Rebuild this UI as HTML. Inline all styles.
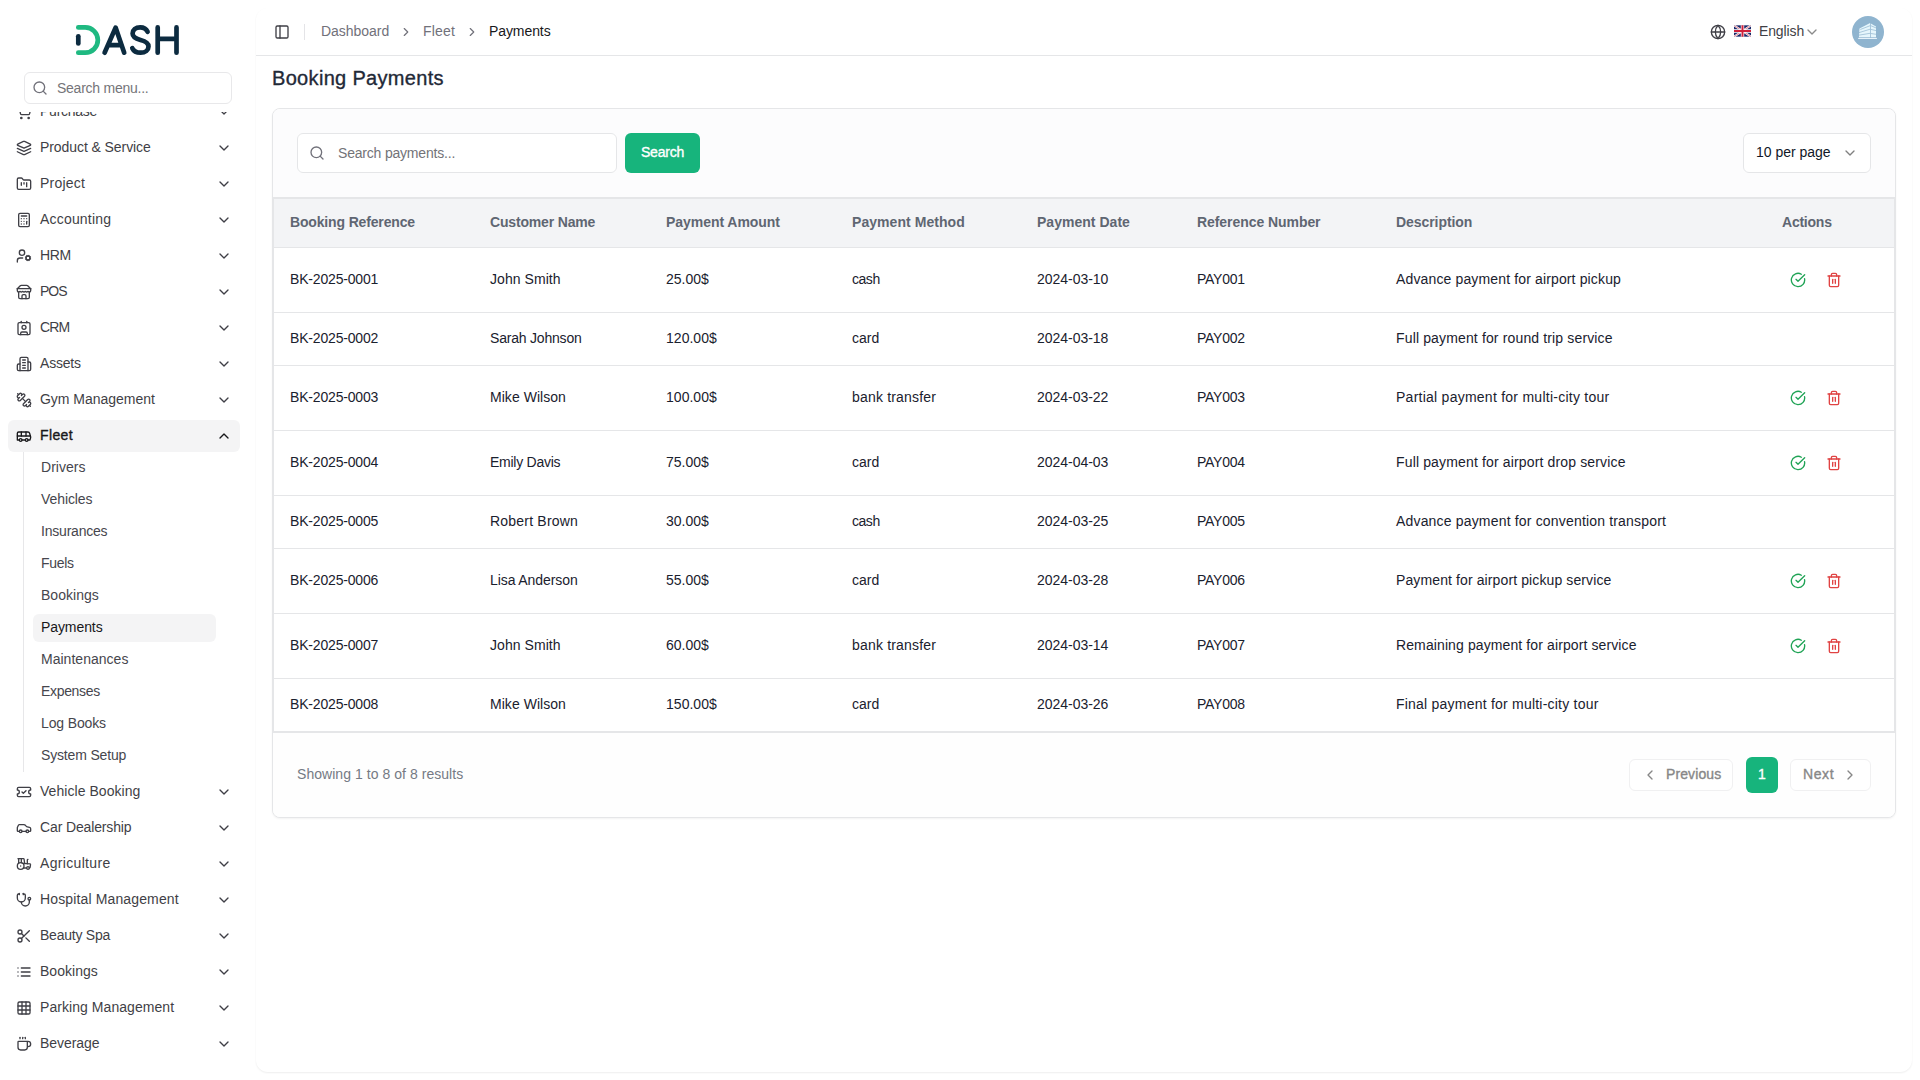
<!DOCTYPE html>
<html><head><meta charset="utf-8"><title>Booking Payments</title>
<style>
*{box-sizing:border-box;margin:0;padding:0}
html,body{width:1920px;height:1080px;overflow:hidden}
body{font-family:"Liberation Sans", sans-serif;font-size:14px;line-height:20px;color:#0f172a;background:#fff;position:relative;-webkit-font-smoothing:antialiased}
.abs{position:absolute}
#sb{position:absolute;left:0;top:0;width:256px;height:1080px;background:#fff;color:#3f3f46}
#sbsearch{position:absolute;left:24px;top:72px;width:208px;height:32px;border:1px solid #e8e8ea;border-radius:6px;background:#fff}
#sbsearch svg{position:absolute;left:7px;top:7px;color:#71717a}
#sbsearch span.ph{position:absolute;left:32px;top:5px;color:#757579;white-space:nowrap}
#scroll{position:absolute;left:0;top:112px;width:256px;height:968px;overflow:hidden}
#scroll>div.in{position:absolute;left:0;top:-112px;width:256px;height:1080px}
.mi{position:absolute;left:8px;width:232px;height:32px;border-radius:6px;display:flex;align-items:center;padding:0 8px;gap:8px;white-space:nowrap}
.mi.act{background:#f4f4f5;color:#18181b;font-weight:500}
.mi .ml{display:block;position:relative;top:-1px}
.si{position:absolute;left:33px;width:183px;height:28px;border-radius:6px;padding:3px 8px 0 8px;white-space:nowrap;color:#46464d}
.si.act{background:#f4f4f5;color:#18181b}
#subline{position:absolute;left:23px;top:452px;width:1px;height:320px;background:#e7e7e9}
#main{position:absolute;left:256px;top:8px;width:1656px;height:1064px;background:#fff;border-radius:12px;box-shadow:0 1px 2px rgba(0,0,0,.07)}
#hdr{position:absolute;left:0;top:0;width:1656px;height:48px;border-bottom:1px solid #e5e6e8}
.bc{position:absolute;top:13px;white-space:nowrap;color:#71717a}
#title{position:absolute;left:16px;top:56px;font-size:20px;line-height:28px;font-weight:500;color:#1f2937;white-space:nowrap}
#card{position:absolute;left:16px;top:100px;width:1624px;height:710px;border:1px solid #e5e6e8;border-radius:8px;background:#fff;box-shadow:0 1px 2px rgba(0,0,0,.05);overflow:hidden}
#ctop{position:absolute;left:0;top:0;width:1622px;height:89px;background:#fcfcfd;border-bottom:1px solid #e5e6e8}
#sinput{position:absolute;left:24px;top:24px;width:320px;height:40px;border:1px solid #e5e6e8;border-radius:6px;background:#fff}
#sinput svg{position:absolute;left:11px;top:11px;color:#71717a}
#sinput span.ph{position:absolute;left:40px;top:9px;color:#737378;white-space:nowrap}
#sbtn{position:absolute;left:352px;top:24px;width:75px;height:40px;border-radius:6px;background:#17b47c;color:#fff;font-weight:500;text-align:center;padding-top:9px;white-space:nowrap}
#pp{position:absolute;left:1470px;top:24px;width:128px;height:40px;border:1px solid #e5e6e8;border-radius:6px;background:#fff;color:#111827}
#pp span.t{position:absolute;left:12px;top:8px;white-space:nowrap}
#pp svg{position:absolute;left:98px;top:11px;color:#808080}
#twrap{position:absolute;left:0;top:89px;width:1622px;height:534px;border:1px solid #e5e6e8;background:#fff}
table{border-collapse:separate;border-spacing:0;table-layout:fixed;width:1620px}
th{height:49px;background:#f3f4f6;border-bottom:1px solid #e5e6e8;text-align:left;padding:0 16px;font-weight:600;color:#5f6672;white-space:nowrap;vertical-align:middle;padding-bottom:2px}
th>span,th{}
td{padding:0 16px 2px 16px;border-bottom:1px solid #e5e6e8;vertical-align:middle;white-space:nowrap;color:#1a212e}
tr.tall td{height:65px}
tr.short td{height:53px}
tr:last-child td{border-bottom:0;height:52px}
td>span,td{}
td.ac{padding-bottom:0}
.acts{display:flex;gap:4px}
.ab{width:32px;height:32px;display:flex;align-items:center;justify-content:center}
.ab.g{color:#1fa355}
.ab.r{color:#e04343}
#foot{position:absolute;left:0;top:623px;width:1622px;height:85px;border-top:1px solid #e5e6e8;background:#fefefe}
#foot .info{position:absolute;left:24px;top:31px;color:#757a84;white-space:nowrap}
.pb{position:absolute;top:26px;height:32px;border:1px solid #f0f0f1;border-radius:6px;background:#fff;color:#878787;font-weight:500;white-space:nowrap;display:flex;align-items:center;padding-bottom:2px}
.pb svg{position:relative;top:1px}
#p1{position:absolute;left:1473px;top:24px;width:32px;height:36px;border-radius:6px;background:#17b47c;color:#fff;font-weight:500;text-align:center;padding-top:7px}
.mi.act .ml,#title,#sbtn,.pb,#p1{-webkit-text-stroke:0.35px currentColor}
</style></head><body>
<div id="sb">
<svg width="128" height="48" viewBox="64 16 128 48" style="position:absolute;left:64px;top:16px" fill="none" stroke-linecap="round" stroke-linejoin="round" stroke-width="4.7">
<path d="M78.3 27.4H85.2a12.65 12.65 0 0 1 0 25.3H78.3" stroke="#1fb981"/>
<path d="M78.3 36.3V43.4" stroke="#0c2b40"/>
<path d="M104.6 52.7 115.6 27.6 124.2 52.7M108.5 45.2H121.3" stroke="#0c2b40"/>
<path d="M147.6 31.8C146.3 29 143.6 27.4 140.2 27.4C135.6 27.4 132.6 30 132.6 33.6C132.6 37.6 136 38.9 140.5 40C145.2 41.2 148.5 42.6 148.5 46.4C148.5 50 145.3 52.7 140.6 52.7C136.6 52.7 133.6 51 132.3 48.2" stroke="#0c2b40"/>
<path d="M157.7 27.4V52.7M176.5 27.4V52.7M157.7 38.8H176.5" stroke="#0c2b40"/>
</svg>
<div id="sbsearch"><svg width="16" height="16" viewBox="0 0 24 24" fill="none" stroke="currentColor" stroke-width="2" stroke-linecap="round" stroke-linejoin="round" style="display:block;flex:none;"><circle cx="11" cy="11" r="8"/><path d="m21 21-4.3-4.3"/></svg><span class="ph"><span style="letter-spacing:-0.252px">Search menu...</span></span></div>
<div id="scroll"><div class="in">
<div id="subline"></div>
<div class="mi" style="top:96px"><svg width="16" height="16" viewBox="0 0 24 24" fill="none" stroke="currentColor" stroke-width="2" stroke-linecap="round" stroke-linejoin="round" style="display:block;flex:none;"><circle cx="8" cy="21" r="1"/><circle cx="19" cy="21" r="1"/><path d="M2.05 2.05h2l2.66 12.42a2 2 0 0 0 2 1.58h9.78a2 2 0 0 0 1.95-1.57l1.65-7.43H5.12"/></svg><span class="ml"><span style="letter-spacing:-0.248px">Purchase</span></span><svg width="16" height="16" viewBox="0 0 24 24" fill="none" stroke="currentColor" stroke-width="2" stroke-linecap="round" stroke-linejoin="round" style="display:block;flex:none;margin-left:auto"><path d="m6 9 6 6 6-6"/></svg></div>
<div class="mi" style="top:132px"><svg width="16" height="16" viewBox="0 0 24 24" fill="none" stroke="currentColor" stroke-width="2" stroke-linecap="round" stroke-linejoin="round" style="display:block;flex:none;"><path d="m12.83 2.18a2 2 0 0 0-1.66 0L2.6 6.08a1 1 0 0 0 0 1.83l8.58 3.91a2 2 0 0 0 1.66 0l8.58-3.9a1 1 0 0 0 0-1.83Z"/><path d="m22 17.65-9.17 4.16a2 2 0 0 1-1.66 0L2 17.65"/><path d="m22 12.65-9.17 4.16a2 2 0 0 1-1.66 0L2 12.65"/></svg><span class="ml"><span style="letter-spacing:-0.078px">Product &amp; Service</span></span><svg width="16" height="16" viewBox="0 0 24 24" fill="none" stroke="currentColor" stroke-width="2" stroke-linecap="round" stroke-linejoin="round" style="display:block;flex:none;margin-left:auto"><path d="m6 9 6 6 6-6"/></svg></div>
<div class="mi" style="top:168px"><svg width="16" height="16" viewBox="0 0 24 24" fill="none" stroke="currentColor" stroke-width="2" stroke-linecap="round" stroke-linejoin="round" style="display:block;flex:none;"><path d="M4 20h16a2 2 0 0 0 2-2V8a2 2 0 0 0-2-2h-7.93a2 2 0 0 1-1.66-.9l-.82-1.2A2 2 0 0 0 7.93 3H4a2 2 0 0 0-2 2v13c0 1.1.9 2 2 2Z"/><path d="M8 10v4"/><path d="M12 10v2"/><path d="M16 10v6"/></svg><span class="ml"><span style="letter-spacing:0.203px">Project</span></span><svg width="16" height="16" viewBox="0 0 24 24" fill="none" stroke="currentColor" stroke-width="2" stroke-linecap="round" stroke-linejoin="round" style="display:block;flex:none;margin-left:auto"><path d="m6 9 6 6 6-6"/></svg></div>
<div class="mi" style="top:204px"><svg width="16" height="16" viewBox="0 0 24 24" fill="none" stroke="currentColor" stroke-width="2" stroke-linecap="round" stroke-linejoin="round" style="display:block;flex:none;"><rect width="16" height="20" x="4" y="2" rx="2"/><line x1="8" x2="16" y1="6" y2="6"/><line x1="16" x2="16" y1="14" y2="18"/><path d="M16 10h.01"/><path d="M12 10h.01"/><path d="M8 10h.01"/><path d="M12 14h.01"/><path d="M8 14h.01"/><path d="M12 18h.01"/><path d="M8 18h.01"/></svg><span class="ml"><span style="letter-spacing:0.188px">Accounting</span></span><svg width="16" height="16" viewBox="0 0 24 24" fill="none" stroke="currentColor" stroke-width="2" stroke-linecap="round" stroke-linejoin="round" style="display:block;flex:none;margin-left:auto"><path d="m6 9 6 6 6-6"/></svg></div>
<div class="mi" style="top:240px"><svg width="16" height="16" viewBox="0 0 24 24" fill="none" stroke="currentColor" stroke-width="2" stroke-linecap="round" stroke-linejoin="round" style="display:block;flex:none;"><circle cx="18" cy="15" r="3"/><circle cx="9" cy="7" r="4"/><path d="M10 15H6a4 4 0 0 0-4 4v2"/><path d="m21.7 16.4-.9-.3"/><path d="m15.2 13.9-.9-.3"/><path d="m16.6 18.7.3-.9"/><path d="m19.1 12.2.3-.9"/><path d="m19.6 18.7-.4-1"/><path d="m16.8 12.3-.4-1"/><path d="m14.3 16.6 1-.4"/><path d="m20.7 13.8 1-.4"/></svg><span class="ml"><span style="letter-spacing:-0.406px">HRM</span></span><svg width="16" height="16" viewBox="0 0 24 24" fill="none" stroke="currentColor" stroke-width="2" stroke-linecap="round" stroke-linejoin="round" style="display:block;flex:none;margin-left:auto"><path d="m6 9 6 6 6-6"/></svg></div>
<div class="mi" style="top:276px"><svg width="16" height="16" viewBox="0 0 24 24" fill="none" stroke="currentColor" stroke-width="2" stroke-linecap="round" stroke-linejoin="round" style="display:block;flex:none;"><path d="m2 7 4.41-4.41A2 2 0 0 1 7.83 2h8.34a2 2 0 0 1 1.42.59L22 7"/><path d="M4 12v8a2 2 0 0 0 2 2h12a2 2 0 0 0 2-2v-8"/><path d="M15 22v-4a2 2 0 0 0-2-2h-2a2 2 0 0 0-2 2v4"/><path d="M2 7h20"/><path d="M22 7v3a2 2 0 0 1-2 2a2.7 2.7 0 0 1-1.59-.63.7.7 0 0 0-.82 0A2.7 2.7 0 0 1 16 12a2.7 2.7 0 0 1-1.59-.63.7.7 0 0 0-.82 0A2.7 2.7 0 0 1 12 12a2.7 2.7 0 0 1-1.59-.63.7.7 0 0 0-.82 0A2.7 2.7 0 0 1 8 12a2.7 2.7 0 0 1-1.59-.63.7.7 0 0 0-.82 0A2.7 2.7 0 0 1 4 12a2 2 0 0 1-2-2V7"/></svg><span class="ml"><span style="letter-spacing:-1.000px">POS</span></span><svg width="16" height="16" viewBox="0 0 24 24" fill="none" stroke="currentColor" stroke-width="2" stroke-linecap="round" stroke-linejoin="round" style="display:block;flex:none;margin-left:auto"><path d="m6 9 6 6 6-6"/></svg></div>
<div class="mi" style="top:312px"><svg width="16" height="16" viewBox="0 0 24 24" fill="none" stroke="currentColor" stroke-width="2" stroke-linecap="round" stroke-linejoin="round" style="display:block;flex:none;"><path d="M16 2v2"/><path d="M7 22v-2a2 2 0 0 1 2-2h6a2 2 0 0 1 2 2v2"/><path d="M8 2v2"/><circle cx="12" cy="11" r="3"/><rect x="3" y="4" width="18" height="18" rx="2"/></svg><span class="ml"><span style="letter-spacing:-0.802px">CRM</span></span><svg width="16" height="16" viewBox="0 0 24 24" fill="none" stroke="currentColor" stroke-width="2" stroke-linecap="round" stroke-linejoin="round" style="display:block;flex:none;margin-left:auto"><path d="m6 9 6 6 6-6"/></svg></div>
<div class="mi" style="top:348px"><svg width="16" height="16" viewBox="0 0 24 24" fill="none" stroke="currentColor" stroke-width="2" stroke-linecap="round" stroke-linejoin="round" style="display:block;flex:none;"><path d="M6 22V4a2 2 0 0 1 2-2h8a2 2 0 0 1 2 2v18Z"/><path d="M6 12H4a2 2 0 0 0-2 2v6a2 2 0 0 0 2 2h2"/><path d="M18 9h2a2 2 0 0 1 2 2v9a2 2 0 0 1-2 2h-2"/><path d="M10 6h4"/><path d="M10 10h4"/><path d="M10 14h4"/><path d="M10 18h4"/></svg><span class="ml"><span style="letter-spacing:-0.211px">Assets</span></span><svg width="16" height="16" viewBox="0 0 24 24" fill="none" stroke="currentColor" stroke-width="2" stroke-linecap="round" stroke-linejoin="round" style="display:block;flex:none;margin-left:auto"><path d="m6 9 6 6 6-6"/></svg></div>
<div class="mi" style="top:384px"><svg width="16" height="16" viewBox="0 0 24 24" fill="none" stroke="currentColor" stroke-width="2" stroke-linecap="round" stroke-linejoin="round" style="display:block;flex:none;"><path d="M14.4 14.4 9.6 9.6"/><path d="M18.657 21.485a2 2 0 1 1-2.829-2.828l-1.767 1.768a2 2 0 1 1-2.829-2.829l6.364-6.364a2 2 0 1 1 2.829 2.829l-1.768 1.767a2 2 0 1 1 2.828 2.829z"/><path d="m21.5 21.5-1.4-1.4"/><path d="M3.9 3.9 2.5 2.5"/><path d="M6.404 12.768a2 2 0 1 1-2.829-2.829l1.768-1.767a2 2 0 1 1-2.828-2.829l2.828-2.828a2 2 0 1 1 2.829 2.828l1.767-1.768a2 2 0 1 1 2.829 2.829z"/></svg><span class="ml"><span style="letter-spacing:-0.022px">Gym Management</span></span><svg width="16" height="16" viewBox="0 0 24 24" fill="none" stroke="currentColor" stroke-width="2" stroke-linecap="round" stroke-linejoin="round" style="display:block;flex:none;margin-left:auto"><path d="m6 9 6 6 6-6"/></svg></div>
<div class="mi act" style="top:420px"><svg width="16" height="16" viewBox="0 0 24 24" fill="none" stroke="currentColor" stroke-width="2" stroke-linecap="round" stroke-linejoin="round" style="display:block;flex:none;"><path d="M8 6v6"/><path d="M15 6v6"/><path d="M2 12h19.6"/><path d="M18 18h3s.5-1.7.8-2.8c.1-.4.2-.8.2-1.2 0-.4-.1-.8-.2-1.2l-1.4-5C20.1 6.8 19.1 6 18 6H4a2 2 0 0 0-2 2v10h3"/><circle cx="7" cy="18" r="2"/><path d="M9 18h5"/><circle cx="16" cy="18" r="2"/></svg><span class="ml"><span style="letter-spacing:0.372px">Fleet</span></span><svg width="16" height="16" viewBox="0 0 24 24" fill="none" stroke="currentColor" stroke-width="2" stroke-linecap="round" stroke-linejoin="round" style="display:block;flex:none;margin-left:auto"><path d="m18 15-6-6-6 6"/></svg></div>
<div class="mi" style="top:776px"><svg width="16" height="16" viewBox="0 0 24 24" fill="none" stroke="currentColor" stroke-width="2" stroke-linecap="round" stroke-linejoin="round" style="display:block;flex:none;"><path d="M2 9a3 3 0 0 1 0 6v2a2 2 0 0 0 2 2h16a2 2 0 0 0 2-2v-2a3 3 0 0 1 0-6V7a2 2 0 0 0-2-2H4a2 2 0 0 0-2 2Z"/><path d="m9 12 2 2 4-4"/></svg><span class="ml"><span style="letter-spacing:0.052px">Vehicle Booking</span></span><svg width="16" height="16" viewBox="0 0 24 24" fill="none" stroke="currentColor" stroke-width="2" stroke-linecap="round" stroke-linejoin="round" style="display:block;flex:none;margin-left:auto"><path d="m6 9 6 6 6-6"/></svg></div>
<div class="mi" style="top:812px"><svg width="16" height="16" viewBox="0 0 24 24" fill="none" stroke="currentColor" stroke-width="2" stroke-linecap="round" stroke-linejoin="round" style="display:block;flex:none;"><path d="M19 17h2c.6 0 1-.4 1-1v-3c0-.9-.7-1.7-1.5-1.9C18.7 10.6 16 10 16 10s-1.3-1.4-2.2-2.3c-.5-.4-1.1-.7-1.8-.7H5c-.6 0-1.1.4-1.4.9l-1.4 2.9A3.7 3.7 0 0 0 2 12v4c0 .6.4 1 1 1h2"/><circle cx="7" cy="17" r="2"/><path d="M9 17h6"/><circle cx="17" cy="17" r="2"/></svg><span class="ml"><span style="letter-spacing:-0.135px">Car Dealership</span></span><svg width="16" height="16" viewBox="0 0 24 24" fill="none" stroke="currentColor" stroke-width="2" stroke-linecap="round" stroke-linejoin="round" style="display:block;flex:none;margin-left:auto"><path d="m6 9 6 6 6-6"/></svg></div>
<div class="mi" style="top:848px"><svg width="16" height="16" viewBox="0 0 24 24" fill="none" stroke="currentColor" stroke-width="2" stroke-linecap="round" stroke-linejoin="round" style="display:block;flex:none;"><path d="m10 11 11 .9a1 1 0 0 1 .8 1.1l-.665 4.158a1 1 0 0 1-.988.842H20"/><path d="M16 18h-5"/><path d="M18 5a1 1 0 0 0-1 1v5.573"/><path d="M3 4h8.129a1 1 0 0 1 .99.863L13 11.246"/><path d="M4 11V4"/><path d="M7 15h.01"/><path d="M8 10.1V4"/><circle cx="18" cy="18" r="2"/><circle cx="7" cy="15" r="5"/></svg><span class="ml"><span style="letter-spacing:0.330px">Agriculture</span></span><svg width="16" height="16" viewBox="0 0 24 24" fill="none" stroke="currentColor" stroke-width="2" stroke-linecap="round" stroke-linejoin="round" style="display:block;flex:none;margin-left:auto"><path d="m6 9 6 6 6-6"/></svg></div>
<div class="mi" style="top:884px"><svg width="16" height="16" viewBox="0 0 24 24" fill="none" stroke="currentColor" stroke-width="2" stroke-linecap="round" stroke-linejoin="round" style="display:block;flex:none;"><path d="M11 2v2"/><path d="M5 2v2"/><path d="M5 3H4a2 2 0 0 0-2 2v4a6 6 0 0 0 12 0V5a2 2 0 0 0-2-2h-1"/><path d="M8 15a6 6 0 0 0 12 0v-3"/><circle cx="20" cy="10" r="2"/></svg><span class="ml"><span style="letter-spacing:0.137px">Hospital Management</span></span><svg width="16" height="16" viewBox="0 0 24 24" fill="none" stroke="currentColor" stroke-width="2" stroke-linecap="round" stroke-linejoin="round" style="display:block;flex:none;margin-left:auto"><path d="m6 9 6 6 6-6"/></svg></div>
<div class="mi" style="top:920px"><svg width="16" height="16" viewBox="0 0 24 24" fill="none" stroke="currentColor" stroke-width="2" stroke-linecap="round" stroke-linejoin="round" style="display:block;flex:none;"><circle cx="6" cy="6" r="3"/><path d="M8.12 8.12 12 12"/><path d="M20 4 8.12 15.88"/><circle cx="6" cy="18" r="3"/><path d="M14.8 14.8 20 20"/></svg><span class="ml"><span style="letter-spacing:-0.239px">Beauty Spa</span></span><svg width="16" height="16" viewBox="0 0 24 24" fill="none" stroke="currentColor" stroke-width="2" stroke-linecap="round" stroke-linejoin="round" style="display:block;flex:none;margin-left:auto"><path d="m6 9 6 6 6-6"/></svg></div>
<div class="mi" style="top:956px"><svg width="16" height="16" viewBox="0 0 24 24" fill="none" stroke="currentColor" stroke-width="2" stroke-linecap="round" stroke-linejoin="round" style="display:block;flex:none;"><path d="M3 12h.01"/><path d="M3 18h.01"/><path d="M3 6h.01"/><path d="M8 12h13"/><path d="M8 18h13"/><path d="M8 6h13"/></svg><span class="ml"><span style="letter-spacing:0.035px">Bookings</span></span><svg width="16" height="16" viewBox="0 0 24 24" fill="none" stroke="currentColor" stroke-width="2" stroke-linecap="round" stroke-linejoin="round" style="display:block;flex:none;margin-left:auto"><path d="m6 9 6 6 6-6"/></svg></div>
<div class="mi" style="top:992px"><svg width="16" height="16" viewBox="0 0 24 24" fill="none" stroke="currentColor" stroke-width="2" stroke-linecap="round" stroke-linejoin="round" style="display:block;flex:none;"><rect width="18" height="18" x="3" y="3" rx="2"/><path d="M3 9h18"/><path d="M3 15h18"/><path d="M9 3v18"/><path d="M15 3v18"/></svg><span class="ml"><span style="letter-spacing:0.057px">Parking Management</span></span><svg width="16" height="16" viewBox="0 0 24 24" fill="none" stroke="currentColor" stroke-width="2" stroke-linecap="round" stroke-linejoin="round" style="display:block;flex:none;margin-left:auto"><path d="m6 9 6 6 6-6"/></svg></div>
<div class="mi" style="top:1028px"><svg width="16" height="16" viewBox="0 0 24 24" fill="none" stroke="currentColor" stroke-width="2" stroke-linecap="round" stroke-linejoin="round" style="display:block;flex:none;"><path d="M10 2v2"/><path d="M14 2v2"/><path d="M16 8a1 1 0 0 1 1 1v8a4 4 0 0 1-4 4H7a4 4 0 0 1-4-4V9a1 1 0 0 1 1-1h14a4 4 0 1 1 0 8h-1"/><path d="M6 2v2"/></svg><span class="ml"><span style="letter-spacing:-0.064px">Beverage</span></span><svg width="16" height="16" viewBox="0 0 24 24" fill="none" stroke="currentColor" stroke-width="2" stroke-linecap="round" stroke-linejoin="round" style="display:block;flex:none;margin-left:auto"><path d="m6 9 6 6 6-6"/></svg></div>
<div class="si" style="top:454px"><span style="letter-spacing:0.020px">Drivers</span></div>
<div class="si" style="top:486px"><span style="letter-spacing:-0.082px">Vehicles</span></div>
<div class="si" style="top:518px"><span style="letter-spacing:-0.208px">Insurances</span></div>
<div class="si" style="top:550px"><span style="letter-spacing:-0.322px">Fuels</span></div>
<div class="si" style="top:582px"><span style="letter-spacing:0.035px">Bookings</span></div>
<div class="si act" style="top:614px"><span style="letter-spacing:-0.086px">Payments</span></div>
<div class="si" style="top:646px"><span style="letter-spacing:0.021px">Maintenances</span></div>
<div class="si" style="top:678px"><span style="letter-spacing:-0.328px">Expenses</span></div>
<div class="si" style="top:710px"><span style="letter-spacing:-0.130px">Log Books</span></div>
<div class="si" style="top:742px"><span style="letter-spacing:-0.161px">System Setup</span></div>
</div></div>
</div>
<div id="main">
 <div id="hdr">
  <div class="abs" style="left:18px;top:16px;color:#3f3f46"><svg width="16" height="16" viewBox="0 0 24 24" fill="none" stroke="currentColor" stroke-width="2" stroke-linecap="round" stroke-linejoin="round" style="display:block;flex:none;"><rect width="18" height="18" x="3" y="3" rx="2"/><path d="M9 3v18"/></svg></div>
  <div class="abs" style="left:48px;top:16px;width:1px;height:16px;background:#e4e4e7"></div>
  <div class="bc" style="left:65px"><span style="letter-spacing:-0.031px">Dashboard</span></div>
  <div class="abs" style="left:143px;top:17px;color:#71717a"><svg width="14" height="14" viewBox="0 0 24 24" fill="none" stroke="currentColor" stroke-width="2" stroke-linecap="round" stroke-linejoin="round" style="display:block;flex:none;"><path d="m9 18 6-6-6-6"/></svg></div>
  <div class="bc" style="left:167px"><span style="letter-spacing:0.175px">Fleet</span></div>
  <div class="abs" style="left:209px;top:17px;color:#71717a"><svg width="14" height="14" viewBox="0 0 24 24" fill="none" stroke="currentColor" stroke-width="2" stroke-linecap="round" stroke-linejoin="round" style="display:block;flex:none;"><path d="m9 18 6-6-6-6"/></svg></div>
  <div class="bc" style="left:233px;color:#18181b"><span style="letter-spacing:-0.086px">Payments</span></div>
  <div class="abs" style="left:1454px;top:16px;color:#3f3f46"><svg width="16" height="16" viewBox="0 0 24 24" fill="none" stroke="currentColor" stroke-width="2" stroke-linecap="round" stroke-linejoin="round" style="display:block;flex:none;"><circle cx="12" cy="12" r="10"/><path d="M12 2a14.5 14.5 0 0 0 0 20 14.5 14.5 0 0 0 0-20"/><path d="M2 12h20"/></svg></div>
  <div class="abs" style="left:1478px;top:17px"><svg width="17" height="12" viewBox="0 0 60 40" style="display:block;flex:none;border-radius:1.5px">
<rect width="60" height="40" fill="#1b2a6b"/>
<path d="M0 0 60 40M60 0 0 40" stroke="#fff" stroke-width="7"/>
<path d="M0 0 60 40M60 0 0 40" stroke="#cf2338" stroke-width="2"/>
<path d="M30 0V40M0 20H60" stroke="#fff" stroke-width="12"/>
<path d="M30 0V40M0 20H60" stroke="#d0203a" stroke-width="7"/>
</svg></div>
  <div class="abs" style="left:1503px;top:13px;color:#3f3f46;white-space:nowrap"><span style="letter-spacing:-0.125px">English</span></div>
  <div class="abs" style="left:1548px;top:16px;color:#8a8a8a"><svg width="16" height="16" viewBox="0 0 24 24" fill="none" stroke="currentColor" stroke-width="2" stroke-linecap="round" stroke-linejoin="round" style="display:block;flex:none;"><path d="m6 9 6 6 6-6"/></svg></div>
  <div class="abs" style="left:1596px;top:8px"><svg width="32" height="32" viewBox="0 0 32 32" style="display:block">
<circle cx="16" cy="16" r="16" fill="#8fb4cf"/>
<path d="M7.5 12.6 18.1 7 18.1 21.3 6.9 21.3Z" fill="#e6f6fc"/>
<path d="M18.8 7.4 24 10.6 24 21.3 18.8 21.3Z" fill="#e6f6fc"/>
<g stroke="#8fb4cf" stroke-width="0.7" fill="none">
<path d="M8.3 13.5 18.1 9.7"/><path d="M6.8 16.7 18.1 13.2"/><path d="M6.8 19.2 18.1 17.3"/>
<path d="M18.8 9.7 24.2 12"/><path d="M18.8 13.4 24.2 14.6"/><path d="M18.8 17.5 24.2 18.3"/>
</g>
<rect x="6.2" y="21.9" width="18.7" height="1.1" fill="#e6f2fa"/>
</svg></div>
 </div>
 <div id="title"><span style="letter-spacing:0.324px">Booking Payments</span></div>
 <div id="card">
  <div id="ctop">
   <div id="sinput"><svg width="16" height="16" viewBox="0 0 24 24" fill="none" stroke="currentColor" stroke-width="2" stroke-linecap="round" stroke-linejoin="round" style="display:block;flex:none;"><circle cx="11" cy="11" r="8"/><path d="m21 21-4.3-4.3"/></svg><span class="ph"><span style="letter-spacing:-0.195px">Search payments...</span></span></div>
   <div id="sbtn"><span style="letter-spacing:-0.219px">Search</span></div>
   <div id="pp"><span class="t"><span style="letter-spacing:-0.013px">10 per page</span></span><svg width="16" height="16" viewBox="0 0 24 24" fill="none" stroke="currentColor" stroke-width="2" stroke-linecap="round" stroke-linejoin="round" style="display:block;flex:none;"><path d="m6 9 6 6 6-6"/></svg></div>
  </div>
  <div id="twrap">
   <table><thead><tr><th style="width:200px"><span style="letter-spacing:-0.157px">Booking Reference</span></th><th style="width:176px"><span style="letter-spacing:-0.167px">Customer Name</span></th><th style="width:186px"><span style="letter-spacing:-0.047px">Payment Amount</span></th><th style="width:185px"><span style="letter-spacing:0.054px">Payment Method</span></th><th style="width:160px"><span style="letter-spacing:0.025px">Payment Date</span></th><th style="width:199px"><span style="letter-spacing:-0.062px">Reference Number</span></th><th style="width:386px"><span style="letter-spacing:-0.062px">Description</span></th><th style="width:128px"><span style="letter-spacing:-0.228px">Actions</span></th></tr></thead><tbody>
<tr class="tall"><td><span style="letter-spacing:-0.178px">BK-2025-0001</span></td><td><span style="letter-spacing:0.055px">John Smith</span></td><td><span style="letter-spacing:0.018px">25.00$</span></td><td><span style="letter-spacing:-0.461px">cash</span></td><td><span style="letter-spacing:-0.036px">2024-03-10</span></td><td><span style="letter-spacing:-0.268px">PAY001</span></td><td><span style="letter-spacing:0.140px">Advance payment for airport pickup</span></td><td class="ac"><div class="acts"><span class="ab g"><svg width="16" height="16" viewBox="0 0 24 24" fill="none" stroke="currentColor" stroke-width="2" stroke-linecap="round" stroke-linejoin="round" style="display:block;flex:none;"><path d="M21.801 10A10 10 0 1 1 17 3.335"/><path d="m9 11 3 3L22 4"/></svg></span><span class="ab r"><svg width="16" height="16" viewBox="0 0 24 24" fill="none" stroke="currentColor" stroke-width="2" stroke-linecap="round" stroke-linejoin="round" style="display:block;flex:none;"><path d="M3 6h18"/><path d="M19 6v14c0 1-1 2-2 2H7c-1 0-2-1-2-2V6"/><path d="M8 6V4c0-1 1-2 2-2h4c1 0 2 1 2 2v2"/><line x1="10" x2="10" y1="11" y2="17"/><line x1="14" x2="14" y1="11" y2="17"/></svg></span></div></td></tr>
<tr class="short"><td><span style="letter-spacing:-0.178px">BK-2025-0002</span></td><td><span style="letter-spacing:-0.202px">Sarah Johnson</span></td><td><span style="letter-spacing:0.031px">120.00$</span></td><td><span style="letter-spacing:-0.020px">card</span></td><td><span style="letter-spacing:-0.036px">2024-03-18</span></td><td><span style="letter-spacing:-0.268px">PAY002</span></td><td><span style="letter-spacing:0.144px">Full payment for round trip service</span></td><td></td></tr>
<tr class="tall"><td><span style="letter-spacing:-0.178px">BK-2025-0003</span></td><td><span style="letter-spacing:0.040px">Mike Wilson</span></td><td><span style="letter-spacing:0.031px">100.00$</span></td><td><span style="letter-spacing:0.181px">bank transfer</span></td><td><span style="letter-spacing:-0.036px">2024-03-22</span></td><td><span style="letter-spacing:-0.268px">PAY003</span></td><td><span style="letter-spacing:0.252px">Partial payment for multi-city tour</span></td><td class="ac"><div class="acts"><span class="ab g"><svg width="16" height="16" viewBox="0 0 24 24" fill="none" stroke="currentColor" stroke-width="2" stroke-linecap="round" stroke-linejoin="round" style="display:block;flex:none;"><path d="M21.801 10A10 10 0 1 1 17 3.335"/><path d="m9 11 3 3L22 4"/></svg></span><span class="ab r"><svg width="16" height="16" viewBox="0 0 24 24" fill="none" stroke="currentColor" stroke-width="2" stroke-linecap="round" stroke-linejoin="round" style="display:block;flex:none;"><path d="M3 6h18"/><path d="M19 6v14c0 1-1 2-2 2H7c-1 0-2-1-2-2V6"/><path d="M8 6V4c0-1 1-2 2-2h4c1 0 2 1 2 2v2"/><line x1="10" x2="10" y1="11" y2="17"/><line x1="14" x2="14" y1="11" y2="17"/></svg></span></div></td></tr>
<tr class="tall"><td><span style="letter-spacing:-0.178px">BK-2025-0004</span></td><td><span style="letter-spacing:-0.254px">Emily Davis</span></td><td><span style="letter-spacing:0.018px">75.00$</span></td><td><span style="letter-spacing:-0.020px">card</span></td><td><span style="letter-spacing:-0.036px">2024-04-03</span></td><td><span style="letter-spacing:-0.268px">PAY004</span></td><td><span style="letter-spacing:0.148px">Full payment for airport drop service</span></td><td class="ac"><div class="acts"><span class="ab g"><svg width="16" height="16" viewBox="0 0 24 24" fill="none" stroke="currentColor" stroke-width="2" stroke-linecap="round" stroke-linejoin="round" style="display:block;flex:none;"><path d="M21.801 10A10 10 0 1 1 17 3.335"/><path d="m9 11 3 3L22 4"/></svg></span><span class="ab r"><svg width="16" height="16" viewBox="0 0 24 24" fill="none" stroke="currentColor" stroke-width="2" stroke-linecap="round" stroke-linejoin="round" style="display:block;flex:none;"><path d="M3 6h18"/><path d="M19 6v14c0 1-1 2-2 2H7c-1 0-2-1-2-2V6"/><path d="M8 6V4c0-1 1-2 2-2h4c1 0 2 1 2 2v2"/><line x1="10" x2="10" y1="11" y2="17"/><line x1="14" x2="14" y1="11" y2="17"/></svg></span></div></td></tr>
<tr class="short"><td><span style="letter-spacing:-0.178px">BK-2025-0005</span></td><td><span style="letter-spacing:0.204px">Robert Brown</span></td><td><span style="letter-spacing:0.018px">30.00$</span></td><td><span style="letter-spacing:-0.461px">cash</span></td><td><span style="letter-spacing:-0.036px">2024-03-25</span></td><td><span style="letter-spacing:-0.268px">PAY005</span></td><td><span style="letter-spacing:0.175px">Advance payment for convention transport</span></td><td></td></tr>
<tr class="tall"><td><span style="letter-spacing:-0.178px">BK-2025-0006</span></td><td><span style="letter-spacing:-0.088px">Lisa Anderson</span></td><td><span style="letter-spacing:0.018px">55.00$</span></td><td><span style="letter-spacing:-0.020px">card</span></td><td><span style="letter-spacing:-0.036px">2024-03-28</span></td><td><span style="letter-spacing:-0.268px">PAY006</span></td><td><span style="letter-spacing:0.111px">Payment for airport pickup service</span></td><td class="ac"><div class="acts"><span class="ab g"><svg width="16" height="16" viewBox="0 0 24 24" fill="none" stroke="currentColor" stroke-width="2" stroke-linecap="round" stroke-linejoin="round" style="display:block;flex:none;"><path d="M21.801 10A10 10 0 1 1 17 3.335"/><path d="m9 11 3 3L22 4"/></svg></span><span class="ab r"><svg width="16" height="16" viewBox="0 0 24 24" fill="none" stroke="currentColor" stroke-width="2" stroke-linecap="round" stroke-linejoin="round" style="display:block;flex:none;"><path d="M3 6h18"/><path d="M19 6v14c0 1-1 2-2 2H7c-1 0-2-1-2-2V6"/><path d="M8 6V4c0-1 1-2 2-2h4c1 0 2 1 2 2v2"/><line x1="10" x2="10" y1="11" y2="17"/><line x1="14" x2="14" y1="11" y2="17"/></svg></span></div></td></tr>
<tr class="tall"><td><span style="letter-spacing:-0.178px">BK-2025-0007</span></td><td><span style="letter-spacing:0.055px">John Smith</span></td><td><span style="letter-spacing:0.018px">60.00$</span></td><td><span style="letter-spacing:0.181px">bank transfer</span></td><td><span style="letter-spacing:-0.036px">2024-03-14</span></td><td><span style="letter-spacing:-0.268px">PAY007</span></td><td><span style="letter-spacing:0.109px">Remaining payment for airport service</span></td><td class="ac"><div class="acts"><span class="ab g"><svg width="16" height="16" viewBox="0 0 24 24" fill="none" stroke="currentColor" stroke-width="2" stroke-linecap="round" stroke-linejoin="round" style="display:block;flex:none;"><path d="M21.801 10A10 10 0 1 1 17 3.335"/><path d="m9 11 3 3L22 4"/></svg></span><span class="ab r"><svg width="16" height="16" viewBox="0 0 24 24" fill="none" stroke="currentColor" stroke-width="2" stroke-linecap="round" stroke-linejoin="round" style="display:block;flex:none;"><path d="M3 6h18"/><path d="M19 6v14c0 1-1 2-2 2H7c-1 0-2-1-2-2V6"/><path d="M8 6V4c0-1 1-2 2-2h4c1 0 2 1 2 2v2"/><line x1="10" x2="10" y1="11" y2="17"/><line x1="14" x2="14" y1="11" y2="17"/></svg></span></div></td></tr>
<tr class="short"><td><span style="letter-spacing:-0.178px">BK-2025-0008</span></td><td><span style="letter-spacing:0.040px">Mike Wilson</span></td><td><span style="letter-spacing:0.031px">150.00$</span></td><td><span style="letter-spacing:-0.020px">card</span></td><td><span style="letter-spacing:-0.036px">2024-03-26</span></td><td><span style="letter-spacing:-0.268px">PAY008</span></td><td><span style="letter-spacing:0.220px">Final payment for multi-city tour</span></td><td></td></tr>
   </tbody></table>
  </div>
  <div id="foot">
   <div class="info"><span style="letter-spacing:0.047px">Showing 1 to 8 of 8 results</span></div>
   <div class="pb" style="left:1356px;width:104px;padding-left:12px;gap:8px"><svg width="16" height="16" viewBox="0 0 24 24" fill="none" stroke="currentColor" stroke-width="2" stroke-linecap="round" stroke-linejoin="round" style="display:block;flex:none;"><path d="m15 18-6-6 6-6"/></svg><span style="letter-spacing:0.105px">Previous</span></div>
   <div id="p1"><span style="letter-spacing:0.109px">1</span></div>
   <div class="pb" style="left:1517px;width:81px;padding-left:12px;gap:8px"><span style="letter-spacing:0.578px">Next</span><svg width="16" height="16" viewBox="0 0 24 24" fill="none" stroke="currentColor" stroke-width="2" stroke-linecap="round" stroke-linejoin="round" style="display:block;flex:none;"><path d="m9 18 6-6-6-6"/></svg></div>
  </div>
 </div>
</div>
</body></html>
